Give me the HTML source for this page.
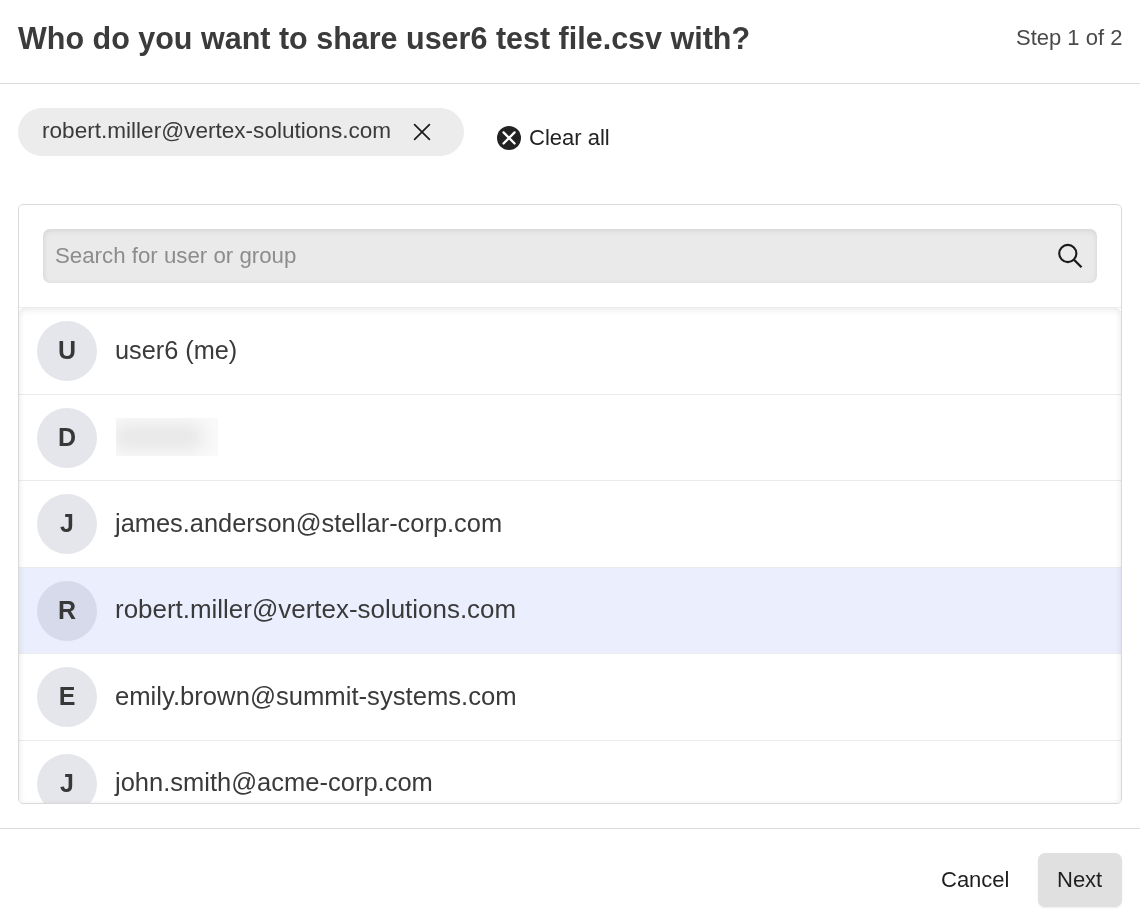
<!DOCTYPE html>
<html><head><meta charset="utf-8">
<style>
*{box-sizing:border-box;margin:0;padding:0}
html,body{width:1140px;height:924px;overflow:hidden;background:#fff}
body{position:relative;-webkit-font-smoothing:antialiased;font-family:"Liberation Sans",sans-serif;color:#3a3a3a}
.a{position:absolute;white-space:nowrap;will-change:transform}
.title{left:18px;top:23.2px;font-size:30.5px;line-height:30px;font-weight:bold;color:#3b3b3b}
.step{left:1016px;top:26.9px;font-size:22px;line-height:22px;color:#4a4a4a}
.hr{position:absolute;left:0;width:1140px;height:1px;background:#dcdcdc}
.chip{left:18px;top:108px;width:446px;height:48px;border-radius:24px;background:#ececec}
.chiptxt{left:42px;top:120.2px;font-size:22.58px;line-height:22.5px;color:#3a3a3a}
.clear{left:529px;top:127.2px;font-size:22px;line-height:22px;color:#222}
.panel{left:18px;top:204px;width:1104px;height:600px;border:1px solid #d9d9d9;border-radius:5px;background:#fff;overflow:hidden}
.search{left:43px;top:229px;width:1054px;height:54px;border-radius:7px;background:#eaeaea;box-shadow:inset 0 2px 6px rgba(0,0,0,0.08), inset 1px 0 4px rgba(0,0,0,0.03)}
.ph{left:55px;top:244.6px;font-size:22.28px;line-height:22px;color:#8c8c8c}
.list{left:19px;top:307px;width:1102px;height:496px;border-top:1px solid #ececec;overflow:hidden}
.listshadow{left:19px;top:308px;width:1102px;height:495px;border-radius:5px;box-shadow:inset 0 3px 6px rgba(0,0,0,0.06), inset 3px 0 5px rgba(0,0,0,0.03), inset -3px 0 5px rgba(0,0,0,0.03);pointer-events:none}
.row{position:absolute;left:0;width:1102px;border-bottom:1px solid #ebebeb}
.row.hl{background:#ebeefd}
.av{position:absolute;left:18px;top:13px;width:60px;height:60px;border-radius:30px;background:#e5e6eb;color:#383838;font-weight:bold;font-size:25px;line-height:58px;text-align:center}
.hl .av{background:#d7daea}
.name{position:absolute;left:96px;font-size:25.6px;line-height:25px;color:#3a3a3a;white-space:nowrap}
.cancel{left:941px;top:869px;font-size:22px;line-height:22px;color:#1f1f1f}
.next{left:1038px;top:853px;width:84px;height:54px;border-radius:7px;background:#e0e0e0;box-shadow:0 1px 2px rgba(0,0,0,0.08)}
.nexttxt{left:1057px;top:869px;font-size:22px;line-height:22px;color:#1f1f1f}
</style></head><body>
<div class="a title">Who do you want to share user6 test file.csv with?</div>
<div class="a step">Step 1 of 2</div>
<div class="hr" style="top:83px"></div>

<div class="a chip"></div>
<div class="a chiptxt">robert.miller@vertex-solutions.com</div>
<svg class="a" style="left:413px;top:123px" width="18" height="18" viewBox="0 0 18 18"><path d="M1.6 1.6L16.4 16.4M16.4 1.6L1.6 16.4" stroke="#1c1c1c" stroke-width="1.7" stroke-linecap="round" fill="none"/></svg>

<svg class="a" style="left:497px;top:126px" width="24" height="24" viewBox="0 0 24 24"><circle cx="12" cy="12" r="12" fill="#222"/><path d="M6.5 6.4L17.6 17.5M17.6 6.4L6.5 17.5" stroke="#fff" stroke-width="2.3" stroke-linecap="round" fill="none"/></svg>
<div class="a clear">Clear all</div>

<div class="a panel"></div>
<div class="a search"></div>
<div class="a ph">Search for user or group</div>
<svg class="a" style="left:1055px;top:241px" width="30" height="30" viewBox="0 0 30 30"><circle cx="12.8" cy="12.5" r="8.6" stroke="#1a1a1a" stroke-width="2.1" fill="none"/><path d="M19 18.8L26.5 26.3" stroke="#1a1a1a" stroke-width="2.3" fill="none"/></svg>

<div class="a list">
  <div class="row" style="top:0;height:87px"><div class="av">U</div><div class="name" style="top:29.8px;font-size:25.3px">user6 (me)</div></div>
  <div class="row" style="top:87px;height:86px"><div class="av">D</div>
    <div style="position:absolute;left:97px;top:23px;width:102px;height:38px;overflow:hidden;background:#fafafa"><div style="position:absolute;left:-4px;top:6px;width:92px;height:26px;background:#e6e6e6;border-radius:12px;filter:blur(9px)"></div></div>
  </div>
  <div class="row" style="top:173px;height:87px"><div class="av">J</div><div class="name" style="top:29.8px;font-size:25.4px">james.anderson@stellar-corp.com</div></div>
  <div class="row hl" style="top:260px;height:86px"><div class="av">R</div><div class="name" style="top:29px;font-size:25.95px">robert.miller@vertex-solutions.com</div></div>
  <div class="row" style="top:346px;height:87px"><div class="av">E</div><div class="name" style="top:29.5px;font-size:25.65px">emily.brown@summit-systems.com</div></div>
  <div class="row" style="top:433px;height:87px;border-bottom:none"><div class="av">J</div><div class="name" style="top:29px;font-size:25.5px">john.smith@acme-corp.com</div></div>
</div>
<div class="a listshadow"></div>

<div class="hr" style="top:828px"></div>
<div class="a cancel">Cancel</div>
<div class="a next"></div>
<div class="a nexttxt">Next</div>
</body></html>
